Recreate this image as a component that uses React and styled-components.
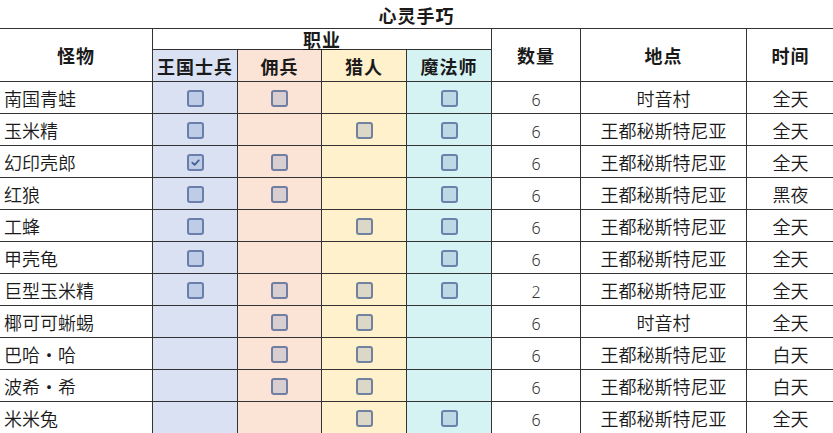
import React from 'react'
import styled, { createGlobalStyle } from 'styled-components'

const GlobalStyle = createGlobalStyle`
  html, body {
    margin: 0;
    padding: 0;
    background: #ffffff;
    overflow: hidden;
  }
  body {
    font-family: "Noto Sans CJK SC", "Noto Sans", sans-serif;
    color: #1a1a1a;
  }
`

const jobs = [
  { key: 'soldier', label: '王国士兵', bg: '#d9e1f3' },
  { key: 'merc', label: '佣兵', bg: '#fbe3d5' },
  { key: 'hunter', label: '猎人', bg: '#fff1cb' },
  { key: 'mage', label: '魔法师', bg: '#d6f3f3' },
]

const WANGDU = '王都秘斯特尼亚'

// null = no box, false = empty box, true = ticked
const monsters = [
  { name: '南国青蛙', jobs: [false, false, null, false], qty: 6, place: '时音村', time: '全天' },
  { name: '玉米精', jobs: [false, null, false, false], qty: 6, place: WANGDU, time: '全天' },
  { name: '幻印壳郎', jobs: [true, false, null, false], qty: 6, place: WANGDU, time: '全天' },
  { name: '红狼', jobs: [false, false, null, false], qty: 6, place: WANGDU, time: '黑夜' },
  { name: '工蜂', jobs: [false, null, false, false], qty: 6, place: WANGDU, time: '全天' },
  { name: '甲壳龟', jobs: [false, null, null, false], qty: 6, place: WANGDU, time: '全天' },
  { name: '巨型玉米精', jobs: [false, false, false, false], qty: 2, place: WANGDU, time: '全天' },
  { name: '椰可可蜥蜴', jobs: [null, false, false, null], qty: 6, place: '时音村', time: '全天' },
  { name: '巴哈・哈', jobs: [null, false, false, null], qty: 6, place: WANGDU, time: '白天' },
  { name: '波希・希', jobs: [null, false, false, null], qty: 6, place: WANGDU, time: '白天' },
  { name: '米米兔', jobs: [null, null, false, false], qty: 6, place: WANGDU, time: '全天' },
]

const Page = styled.div`
  width: 835px;
  margin-left: -1px;
`

const Title = styled.div`
  height: 28px;
  line-height: 30px;
  text-align: center;
  font-size: 18px;
  font-weight: 700;
  letter-spacing: 1px;
`

const Table = styled.table`
  width: 835px;
  border-collapse: collapse;
  table-layout: fixed;
`

const HeadCell = styled.th`
  border: 1px solid #333;
  border-top: ${p => (p.$flat ? 'none' : '1px solid #333')};
  background: ${p => p.$bg || '#ffffff'};
  height: ${p => p.$h || 32}px;
  padding: 0;
  font-size: 18px;
  font-weight: 700;
  letter-spacing: 1px;
  text-align: center;
  vertical-align: middle;
  line-height: 1;
`

const GroupLabel = styled.span`
  text-decoration: underline;
  text-underline-offset: 2px;
`

const Cell = styled.td`
  border: 1px solid #333;
  background: ${p => p.$bg || '#ffffff'};
  height: 31px;
  padding: 0 ${p => (p.$left ? '4px' : '0')};
  text-align: ${p => (p.$left ? 'left' : 'center')};
  vertical-align: middle;
  font-size: 18px;
  font-weight: 350;
  line-height: 1;
  white-space: nowrap;
`

const Qty = styled.span`
  font-family: "Noto Sans", sans-serif;
  font-size: 16px;
  font-weight: 300;
  color: #333;
  position: relative;
  top: 1px;
`

const Box = styled.span`
  display: inline-flex;
  align-items: center;
  justify-content: center;
  width: 13px;
  height: 13px;
  border: 2px solid rgba(70, 92, 145, 0.7);
  border-radius: 3px;
  background: rgba(125, 150, 195, 0.28);
  vertical-align: middle;
  margin-top: -2px;
`

const Check = () => (
  <svg width="11" height="11" viewBox="0 0 12 12">
    <path d="M2.5 6.2 L5 8.6 L9.6 3.6" fill="none" stroke="#46609a" strokeWidth="2" strokeLinecap="round" strokeLinejoin="round" />
  </svg>
)

const CheckBox = ({ checked }) => <Box>{checked && <Check />}</Box>

export default function App() {
  return (
    <Page>
      <GlobalStyle />
      <Title>心灵手巧</Title>
      <Table>
        <colgroup>
          <col style={{ width: 153 }} />
          <col style={{ width: 85 }} />
          <col style={{ width: 84 }} />
          <col style={{ width: 85 }} />
          <col style={{ width: 85 }} />
          <col style={{ width: 89 }} />
          <col style={{ width: 166 }} />
          <col style={{ width: 88 }} />
        </colgroup>
        <thead>
          <tr>
            <HeadCell rowSpan={2}>怪物</HeadCell>
            <HeadCell colSpan={4} $h={20}>
              <GroupLabel>职业</GroupLabel>
            </HeadCell>
            <HeadCell rowSpan={2}>数量</HeadCell>
            <HeadCell rowSpan={2}>地点</HeadCell>
            <HeadCell rowSpan={2}>时间</HeadCell>
          </tr>
          <tr>
            {jobs.map(j => (
              <HeadCell key={j.key} $bg={j.bg} $flat $h={31}>
                {j.label}
              </HeadCell>
            ))}
          </tr>
        </thead>
        <tbody>
          {monsters.map(m => (
            <tr key={m.name}>
              <Cell $left>{m.name}</Cell>
              {m.jobs.map((state, i) => (
                <Cell key={jobs[i].key} $bg={jobs[i].bg}>
                  {state !== null && <CheckBox checked={state} />}
                </Cell>
              ))}
              <Cell>
                <Qty>{m.qty}</Qty>
              </Cell>
              <Cell>{m.place}</Cell>
              <Cell>{m.time}</Cell>
            </tr>
          ))}
        </tbody>
      </Table>
    </Page>
  )
}
